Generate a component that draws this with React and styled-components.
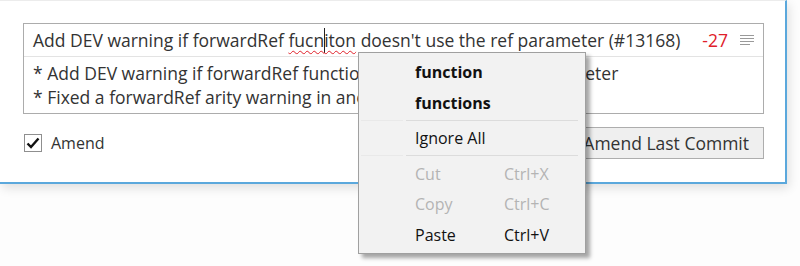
import React from "react";
import styled, { createGlobalStyle } from "styled-components";

const Global = createGlobalStyle`
  html, body { margin: 0; padding: 0; background: #ffffff; }
  body { font-family: "Open Sans", "Noto Sans", sans-serif; width: 800px; height: 266px; overflow: hidden; }
`;

const Page = styled.div`
  position: relative;
  width: 800px;
  height: 266px;
  background: #fdfdfd;
`;

const Window = styled.div`
  box-sizing: border-box;
  width: 787px;
  height: 184px;
  background: #ffffff;
  border-top: 1px solid #ececec;
  border-right: 2px solid #5ba8dc;
  border-bottom: 2px solid #5ba8dc;
  box-shadow: 2px 4px 10px rgba(0, 0, 0, 0.12);
  padding: 22px 20px 0 23px;
  display: flex;
  flex-direction: column;
`;

const CommitBox = styled.div`
  box-sizing: border-box;
  width: 741px;
  border: 1px solid #acacac;
  display: flex;
  flex-direction: column;
`;

const SummaryRow = styled.div`
  box-sizing: border-box;
  height: 33px;
  border-bottom: 1px solid #e3e3e3;
  display: flex;
  align-items: center;
  padding: 0 9px 0 9px;
  font-size: 17.5px;
  color: #333333;
`;

const SummaryText = styled.div`
  flex: 1;
  white-space: nowrap;
  position: relative;
`;

const Misspelled = styled.span`
  text-decoration: underline wavy #e0202a;
  text-decoration-thickness: 1px;
  text-underline-offset: 3px;
  text-decoration-skip-ink: none;
`;

const Caret = styled.span`
  display: inline-block;
  width: 1px;
  height: 25px;
  background: #222;
  vertical-align: -6px;
  margin: 0 -0.5px;
`;

const Count = styled.span`
  color: #e0202a;
  font-size: 17.5px;
  margin-right: 12px;
`;

const Description = styled.div`
  box-sizing: border-box;
  height: 56px;
  padding: 4px 9px 0 9px;
  font-size: 17.5px;
  line-height: 24px;
  color: #333333;
  white-space: nowrap;
  overflow: hidden;
`;

const Footer = styled.div`
  display: flex;
  align-items: center;
  justify-content: space-between;
  width: 741px;
  margin-top: 13px;
`;

const CheckLabel = styled.label`
  display: flex;
  align-items: center;
  gap: 9px;
  font-size: 16px;
  color: #333333;
  margin-left: 1px;
`;

const Box = styled.span`
  box-sizing: border-box;
  width: 18px;
  height: 18px;
  border: 1px solid #8f8f8f;
  background: #fff;
  display: flex;
  align-items: center;
  justify-content: center;
`;

const Button = styled.button`
  box-sizing: border-box;
  height: 32px;
  padding: 0 14px;
  width: 200px;
  border: 1px solid #adadad;
  background: #efefef;
  font-family: inherit;
  font-size: 17.5px;
  color: #333333;
  text-align: right;
  white-space: nowrap;
`;

const Menu = styled.div`
  position: absolute;
  left: 358px;
  top: 52px;
  box-sizing: border-box;
  width: 228px;
  height: 202px;
  background: #f2f2f2;
  border: 1px solid #a0a0a0;
  box-shadow: 4px 4px 4px rgba(0, 0, 0, 0.35);
  padding: 4px 2px 3px;
  display: flex;
  flex-direction: column;
  font-size: 16px;
`;

const Item = styled.div`
  height: 31px;
  display: grid;
  grid-template-columns: 54px 89px 1fr;
  align-items: center;
  color: ${(p) => (p.$disabled ? "#b4b4b4" : "#111111")};
  font-weight: ${(p) => (p.$bold ? 700 : 400)};
`;

const Separator = styled.div`
  height: 5px;
  display: flex;
  align-items: center;
  gap: 3px;
  padding-right: 5px;
`;

const SepPart = styled.span`
  height: 1px;
  background: ${(p) => (p.$light ? "#e9e9e9" : "#dcdcdc")};
  width: ${(p) => (p.$light ? "42px" : "auto")};
  flex: ${(p) => (p.$light ? "none" : "1")};
`;

function LinesIcon() {
  return (
    <svg width="14" height="10" viewBox="0 0 14 10">
      <g stroke="#9a9a9a" strokeWidth="1">
        <line x1="0" y1="0.5" x2="14" y2="0.5" />
        <line x1="0" y1="3.5" x2="14" y2="3.5" />
        <line x1="0" y1="6.5" x2="14" y2="6.5" />
        <line x1="0" y1="9.5" x2="10" y2="9.5" />
      </g>
    </svg>
  );
}

function Check() {
  return (
    <svg width="14" height="12" viewBox="0 0 14 12">
      <path d="M1.5 6.5 L5 10 L12.5 1.5" fill="none" stroke="#111" strokeWidth="2.4" />
    </svg>
  );
}

export default function App() {
  return (
    <Page>
      <Global />
      <Window>
        <CommitBox>
          <SummaryRow>
            <SummaryText>
              Add DEV warning if forwardRef <Misspelled>fucn<Caret />iton</Misspelled> doesn't use the ref parameter (#13168)
            </SummaryText>
            <Count>-27</Count>
            <LinesIcon />
          </SummaryRow>
          <Description>
            * Add DEV warning if forwardRef function doesn't use the ref parameter
            <br />
            * Fixed a forwardRef arity warning in another test
          </Description>
        </CommitBox>
        <Footer>
          <CheckLabel>
            <Box>
              <Check />
            </Box>
            Amend
          </CheckLabel>
          <Button>Amend Last Commit</Button>
        </Footer>
      </Window>
      <Menu>
        <Item $bold><span /><span>function</span></Item>
        <Item $bold><span /><span>functions</span></Item>
        <Separator><SepPart $light /><SepPart /></Separator>
        <Item><span /><span>Ignore All</span></Item>
        <Separator><SepPart $light /><SepPart /></Separator>
        <Item $disabled><span /><span>Cut</span><span>Ctrl+X</span></Item>
        <Item $disabled><span /><span>Copy</span><span>Ctrl+C</span></Item>
        <Item><span /><span>Paste</span><span>Ctrl+V</span></Item>
      </Menu>
    </Page>
  );
}
